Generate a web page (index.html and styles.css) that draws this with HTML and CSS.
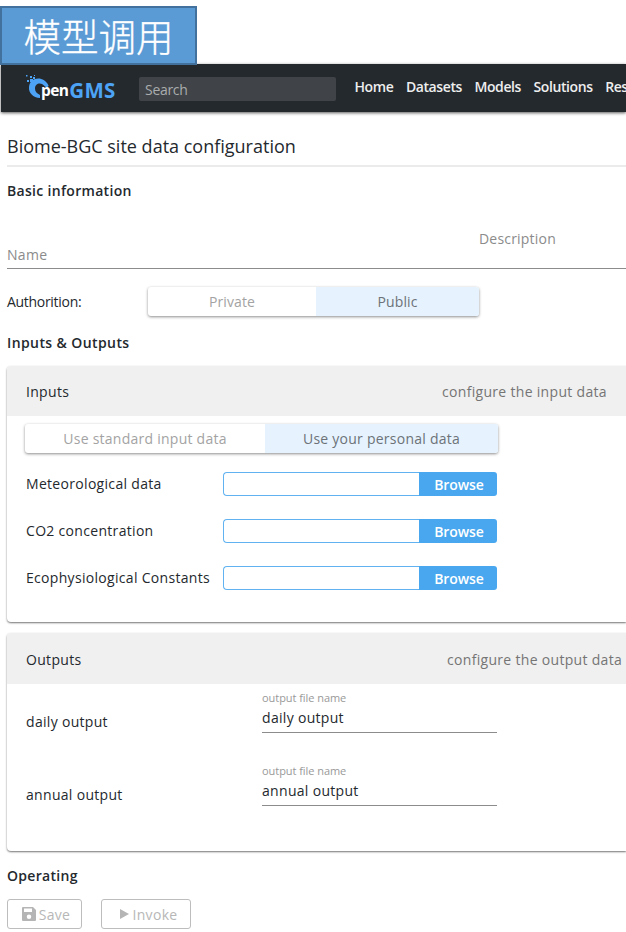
FILE: index.html
```
<!DOCTYPE html>
<html lang="en">
<head>
<meta charset="utf-8">
<title>OpenGMS</title>
<link rel="stylesheet" href="styles.css">
</head>
<body>
<div class="banner" lang="zh-CN">模型调用</div>
<header class="topbar">
  <div class="logo">
    <svg class="logo-mark" width="26" height="30" viewBox="0 0 26 30">
      <path d="M3 13C4 2.500 18 1.500 22.500 11.500C22 13.500 20 13.500 18 11.500C15 8 9 9 9 14.500C9 18 11 19.500 14 21V24C7 23.500 2.500 19 3 13Z" fill="#4da3f5"/>
      <path d="M0 1h1.500v1.500H0zM4 2h2v2H4zM1 6h2v2H1zM4 5h3v3H4zM7 3h2v2H7zM8 1h1v1H8z" fill="#4da3f5"/>
    </svg>
    <span class="logo-pen">pen</span><span class="logo-gms">GMS</span>
  </div>
  <div class="search">Search</div>
  <nav class="nav">
    <a>Home</a><a>Datasets</a><a>Models</a><a>Solutions</a><a>Resources</a>
  </nav>
</header>
<main class="page">
  <h1 class="title"><span>Biome-BGC site data configuration</span></h1>
  <h2 class="section basic">Basic information</h2>
  <div class="fields">
    <span class="field-name">Name</span>
    <span class="field-description">Description</span>
  </div>
  <div class="authority">
    <span class="authority-label">Authorition:</span>
    <div class="toggle toggle-access">
      <span class="option">Private</span><span class="option selected">Public</span>
    </div>
  </div>
  <h2 class="section io">Inputs &amp; Outputs</h2>
  <section class="card inputs">
    <div class="card-head"><span class="t-inputs">Inputs</span><span class="hint">configure the input data</span></div>
    <div class="toggle toggle-source">
      <span class="option">Use standard input data</span><span class="option selected">Use your personal data</span>
    </div>
    <div class="file-row"><span class="file-label">Meteorological data</span><span class="file-path"></span><span class="browse">Browse</span></div>
    <div class="file-row"><span class="file-label">CO2 concentration</span><span class="file-path"></span><span class="browse">Browse</span></div>
    <div class="file-row"><span class="file-label">Ecophysiological Constants</span><span class="file-path"></span><span class="browse">Browse</span></div>
  </section>
  <section class="card outputs">
    <div class="card-head"><span class="t-outputs">Outputs</span><span class="hint">configure the output data</span></div>
    <div class="out-row">
      <span class="out-label">daily output</span>
      <div class="out-field"><span class="caption">output file name</span><span class="value">daily output</span></div>
    </div>
    <div class="out-row">
      <span class="out-label">annual output</span>
      <div class="out-field"><span class="caption">output file name</span><span class="value">annual output</span></div>
    </div>
  </section>
  <h2 class="section operating">Operating</h2>
  <div class="actions">
    <div class="button save">
      <svg width="14" height="14" viewBox="0 0 14 14"><path fill="#b5b5b5" fill-rule="evenodd" d="M1 0H11L14 3V13Q14 14 13 14H1Q0 14 0 13V1Q0 0 1 0ZM2 1.500V5H10V1.500ZM7 7.500A2.200 2.200 0 1 0 7 12A2.200 2.200 0 1 0 7 7.500Z"/></svg>
      <span>Save</span>
    </div>
    <div class="button invoke">
      <svg width="9" height="10" viewBox="0 0 9 10"><path fill="#b5b5b5" d="M0 0L9 5L0 10Z"/></svg>
      <span>Invoke</span>
    </div>
  </div>
</main>
</body>
</html>
```
FILE: styles.css
```
* { box-sizing: border-box; }
body {
  margin: 0;
  padding-top: 6px;
  width: 626px;
  height: 932px;
  overflow: hidden;
  background: #fff;
  color: #24292e;
  font: 14px/20px "Open Sans", "Noto Sans CJK SC", sans-serif;
  letter-spacing: .31px;
  white-space: nowrap;
}
.banner {
  position: relative;
  z-index: 1;
  width: 197px;
  height: 59px;
  margin-bottom: -1px;
  border: 2px solid #41719c;
  background: #5b9bd5;
  color: #fff;
  font: 300 37.500px/54px "Noto Sans CJK SC", sans-serif;
  letter-spacing: 0;
  text-align: center;
  -webkit-text-stroke: .3px #fff;
}
.topbar {
  display: flex;
  height: 48px;
  margin-left: 1px;
  overflow: visible;
  background: #24292e;
  box-shadow: 0 1px 3px rgba(0,0,0,.65);
}
.logo {
  display: flex;
  flex: none;
  width: 138px;
  padding: 10px 0 0 25px;
  font-weight: 700;
  line-height: 33px;
}
.logo-mark { margin-right: -11px; flex: none; }
.logo-pen { color: #fff; font-size: 15.500px; letter-spacing: -.6px; }
.logo-gms { margin-left: 1px; color: #4da3f5; font-size: 20.500px; line-height: 32px; letter-spacing: .2px; }
.search {
  flex: none;
  width: 197px;
  height: 24px;
  margin-top: 13px;
  padding-left: 6px;
  border-radius: 2px;
  background: #404448;
  color: #aaacae;
  line-height: 25px;
  letter-spacing: -.3px;
}
.nav {
  display: flex;
  flex: 1;
  min-width: 0;
  gap: 12.500px;
  margin-left: 18.500px;
  overflow: hidden;
  color: #eee;
  font-weight: 600;
  line-height: 46px;
  letter-spacing: -.4px;
}
.page { padding-left: 7px; }
.title {
  height: 55px;
  margin: 0;
  padding-top: 14px;
  border-bottom: 2px solid #ebebeb;
  font-size: 18px;
  font-weight: 400;
  line-height: 40px;
  letter-spacing: 0;
}
.section { margin: 0; font-size: 14px; font-weight: 600; line-height: 20px; }
.basic { padding-top: 14px; height: 47px; }
.fields {
  display: flex;
  height: 55px;
  border-bottom: 1px solid #8c8c8c;
  color: #8b8b8b;
}
.field-name { width: 472px; padding-top: 31px; }
.field-description { padding-top: 15px; letter-spacing: .2px; }
.authority { display: flex; height: 64px; padding-top: 18px; }
.authority-label { width: 141px; line-height: 30px; letter-spacing: -.3px; }
.toggle {
  display: flex;
  height: 29px;
  border-radius: 3px;
  box-shadow: 0 1px 3px rgba(0,0,0,.45);
  color: #a3a3a3;
  line-height: 30px;
  text-align: center;
}
.selected { background: #e6f3fe; color: #6c7278; }
.toggle-access { width: 331px; letter-spacing: .1px; }
.toggle-access .option { width: 168px; }
.toggle-access .selected { width: 163px; border-radius: 0 3px 3px 0; }
.io { height: 33px; letter-spacing: .4px; }
.card {
  border-radius: 4px 0 0 4px;
  box-shadow: 0 1px 2px rgba(0,0,0,.55);
}
.inputs { height: 256px; margin-bottom: 11px; }
.outputs { height: 218px; }
.card-head {
  display: flex;
  height: 50px;
  padding-left: 19px;
  border-radius: 4px 0 0 0;
  background: #f0f0f0;
  line-height: 51px;
}
.outputs .card-head { height: 51px; line-height: 54px; }
.hint { color: #757575; }
.t-inputs { width: 416px; }
.t-outputs { width: 421px; }
.toggle-source { width: 473px; margin: 8px 0 19px 18px; letter-spacing: .25px; }
.toggle-source .option { width: 240px; }
.toggle-source .selected { width: 233px; border-radius: 0 3px 3px 0; }
.file-row { display: flex; height: 24px; margin: 0 0 23px 19px; line-height: 23px; }
.file-label { width: 197px; }
.file-path { width: 196px; border: 1px solid #60b2f0; border-right: 0; border-radius: 4px 0 0 4px; }
.browse {
  width: 78px;
  padding-left: 2px;
  border-radius: 0 3px 3px 0;
  background: #48a7ee;
  color: #fff;
  font-weight: 600;
  line-height: 26px;
  letter-spacing: -.1px;
  text-align: center;
}
.out-row { display: flex; height: 73px; padding-left: 19px; }
.out-label { width: 236px; padding-top: 28px; }
.out-field {
  display: flex;
  flex-direction: column;
  width: 235px;
  height: 49px;
  padding-top: 6px;
  border-bottom: 1px solid #8c8c8c;
}
.caption { color: #999; font-size: 11px; line-height: 16px; letter-spacing: -.05px; }
.value { line-height: 24px; }
.operating { padding-top: 15px; height: 48px; }
.actions { display: flex; gap: 19px; }
.button {
  display: flex;
  align-items: center;
  justify-content: center;
  height: 30px;
  border: 1px solid #bdbdbd;
  border-radius: 3px;
  color: #b7b7b7;
}
.save { width: 75px; padding-left: 3px; gap: 3px; }
.invoke { width: 90px; padding-left: 5px; gap: 4px; }
.button span { padding-top: 2px; }
```
